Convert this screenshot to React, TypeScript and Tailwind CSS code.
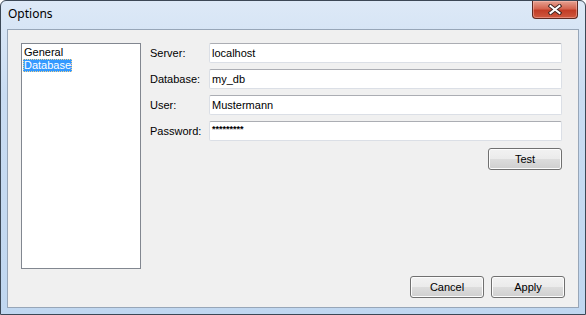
const fields: { label: string; value: string; secret?: boolean }[] = [
  { label: 'Server:', value: 'localhost' },
  { label: 'Database:', value: 'my_db' },
  { label: 'User:', value: 'Mustermann' },
  { label: 'Password:', value: '*********', secret: true },
];

function CloseButton() {
  return (
    <div className="mr-[1px] flex h-[18px] w-[46px] items-center justify-center rounded-b-[4px] border border-t-0 border-[#5e2a22] bg-[linear-gradient(#e6a292,#d46550_45%,#c23d27_55%,#cf5940)] shadow-[inset_0_0_0_1px_rgba(255,200,190,0.45)]">
      <svg width="14" height="11" viewBox="0 0 14 11">
        <path d="M2.5 2 L11.5 9 M11.5 2 L2.5 9" stroke="#3d2420" strokeWidth="4" strokeLinecap="square" />
        <path d="M2.5 2 L11.5 9 M11.5 2 L2.5 9" stroke="#ffffff" strokeWidth="2" strokeLinecap="square" />
      </svg>
    </div>
  );
}

function Button({ label }: { label: string }) {
  return (
    <div className="flex h-[22px] w-[74px] items-center justify-center rounded-[3px] border border-[#707070] bg-[linear-gradient(#f2f2f2,#ebebeb_50%,#dddddd_50%,#cfcfcf)] text-[11px] text-black shadow-[inset_0_0_0_1px_#fcfcfc]">
      {label}
    </div>
  );
}

export default function App() {
  return (
    <div className="flex h-[315px] w-[586px] flex-col rounded-t-[6px] border border-[#3c4856] bg-[linear-gradient(#dde9f7,#c9dcf2_30%,#c0d7f0)] px-[6px] pb-[6px] font-['Liberation_Sans',Arial,sans-serif]">
      <div className="flex h-[28px] items-start justify-between">
        <span className="pl-[1px] pt-[5px] font-['Noto_Sans',sans-serif] text-[12px] leading-[16px] text-black">Options</span>
        <CloseButton />
      </div>

      <div className="flex flex-1 flex-col border border-[#97a6b8] bg-[#f0f0f0] pb-[9px] pl-[13px] pr-[13px] pt-[13px] text-[11px] leading-[13px] text-black">
        <div className="flex">
          <div className="flex h-[226px] w-[120px] flex-col items-start border border-[#828790] bg-white pl-[1px] pt-[2px]">
            <span className="px-[1px]">General</span>
            <span className="bg-[#3399ff] px-[1px] text-white outline outline-1 -outline-offset-1 outline-dotted outline-[#f5d38a]">Database</span>
          </div>

          <div className="ml-[9px] flex flex-1 flex-col pr-[3px]">
            <div className="flex flex-col gap-[6px]">
              {fields.map((field) => (
                <div key={field.label} className="flex items-center">
                  <span className="w-[59px]">{field.label}</span>
                  <div className="flex h-[20px] flex-1 items-center rounded-[2px] border border-[#dbdfe6] border-t-[#abadb3] bg-white pl-[2px]">
                    {field.secret ? (
                      <span className="-mt-[3px] text-[9px] leading-[9px] font-bold">{field.value}</span>
                    ) : (
                      field.value
                    )}
                  </div>
                </div>
              ))}
            </div>
            <div className="mt-[7px] flex justify-end">
              <Button label="Test" />
            </div>
          </div>
        </div>

        <div className="mt-auto flex justify-end gap-[7px]">
          <Button label="Cancel" />
          <Button label="Apply" />
        </div>
      </div>
    </div>
  );
}
